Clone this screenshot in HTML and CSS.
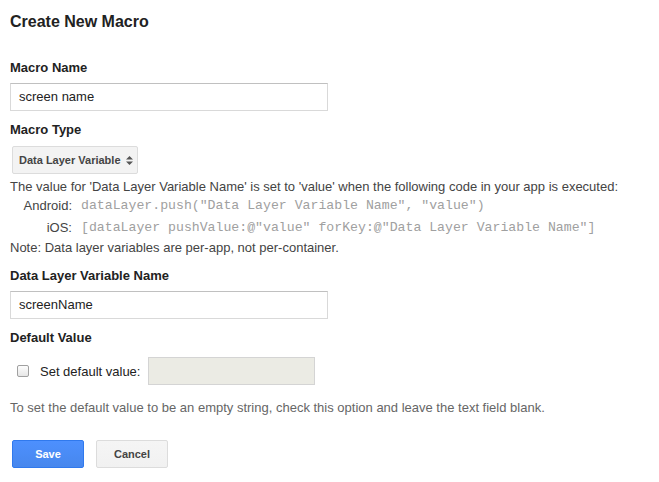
FILE: index.html
```html
<!DOCTYPE html>
<html>
<head>
<meta charset="utf-8">
<link rel="stylesheet" href="styles.css">
</head>
<body>
<div class="page">
  <h1 class="title">Create New Macro</h1>

  <div class="label label-first">Macro Name</div>
  <div class="field"><div class="text-input">screen name</div></div>

  <div class="label label-type">Macro Type</div>
  <div class="select-wrap">
    <div class="select">
      <span>Data Layer Variable</span>
      <svg class="arrows" width="7" height="9" viewBox="0 0 7 9"><path d="M3.5 0 L7 3.5 H0 Z M0 5.5 H7 L3.5 9 Z" fill="#555"/></svg>
    </div>
  </div>

  <p class="desc">The value for 'Data Layer Variable Name' is set to 'value' when the following code in your app is executed:</p>
  <div class="code-grid">
    <span class="platform">Android:</span><code>dataLayer.push("Data Layer Variable Name", "value")</code>
    <span class="platform">iOS:</span><code>[dataLayer pushValue:@"value" forKey:@"Data Layer Variable Name"]</code>
  </div>
  <p class="note">Note: Data layer variables are per-app, not per-container.</p>

  <div class="label label-dl">Data Layer Variable Name</div>
  <div class="field"><div class="text-input">screenName</div></div>

  <div class="label label-default">Default Value</div>
  <div class="check-row">
    <span class="checkbox"></span>
    <span class="check-label">Set default value:</span>
    <div class="disabled-input"></div>
  </div>

  <p class="help">To set the default value to be an empty string, check this option and leave the text field blank.</p>

  <div class="buttons">
    <button class="btn btn-save">Save</button>
    <button class="btn btn-cancel">Cancel</button>
  </div>
</div>
</body>
</html>
```

FILE: styles.css
```css
* { box-sizing: border-box; }
html, body { margin: 0; padding: 0; background: #fff; }
body {
  font-family: Arial, "Liberation Sans", sans-serif;
  font-size: 13px;
  color: #222;
}
.page { padding: 12px 10px 0 10px; }
.title {
  margin: 0;
  font-size: 16px;
  line-height: 20px;
  font-weight: bold;
  color: #222;
}
.label {
  font-size: 13px;
  line-height: 16px;
  font-weight: bold;
  color: #222;
}
.label-first { margin-top: 28px; }
.label-type { margin-top: 11px; }
.label-dl { margin-top: 11px; }
.label-default { margin-top: 11px; }
.field { margin-top: 7px; }
.text-input {
  width: 318px;
  height: 28px;
  border: 1px solid #d9d9d9;
  border-top-color: #c0c0c0;
  padding: 0 8px;
  line-height: 26px;
  font-size: 13px;
  color: #222;
  background: #fff;
}
.select-wrap { margin-top: 8px; padding-left: 2px; }
.select {
  display: inline-flex;
  align-items: center;
  width: 126px;
  height: 28px;
  padding: 0 0 0 6px;
  border: 1px solid #dcdcdc;
  border-radius: 2px;
  background: #f3f3f3;
  font-size: 11px;
  font-weight: bold;
  color: #444;
}
.arrows { margin-left: 5px; }
.desc {
  margin: 3px 0 0 0;
  line-height: 20px;
  color: #444;
}
.code-grid {
  margin-top: -2px;
  display: grid;
  grid-template-columns: 62px auto;
  column-gap: 9px;
  justify-content: start;
}
.platform {
  text-align: right;
  line-height: 22px;
  color: #444;
}
code {
  font-family: "Liberation Mono", "Courier New", monospace;
  font-size: 13.2px;
  line-height: 22px;
  color: #a0a0a0;
}
.note {
  margin: 0;
  line-height: 18px;
  color: #444;
}
.check-row {
  margin-top: 11px;
  display: flex;
  align-items: center;
  padding-left: 7px;
}
.checkbox {
  width: 12px;
  height: 12px;
  border: 1px solid #a0a0a0;
  border-radius: 2px;
  background: linear-gradient(#fdfdfd, #e6e6e6);
}
.check-label {
  margin-left: 11px;
  color: #222;
}
.disabled-input {
  margin-left: 8px;
  width: 167px;
  height: 28px;
  border: 1px solid #d4d4d4;
  background: #ebebe4;
}
.help {
  margin: 15px 0 0 0;
  line-height: 16px;
  color: #666;
}
.buttons {
  margin-top: 24px;
  display: flex;
  gap: 12px;
  padding-left: 2px;
}
.btn {
  width: 72px;
  height: 28px;
  border-radius: 2px;
  font-family: Arial, "Liberation Sans", sans-serif;
  font-size: 11px;
  font-weight: bold;
  padding: 0;
}
.btn-save {
  color: #fff;
  background: linear-gradient(#4d90fe, #4787ed);
  border: 1px solid #3079ed;
}
.btn-cancel {
  color: #444;
  background: linear-gradient(#f5f5f5, #f1f1f1);
  border: 1px solid #dcdcdc;
}
```
